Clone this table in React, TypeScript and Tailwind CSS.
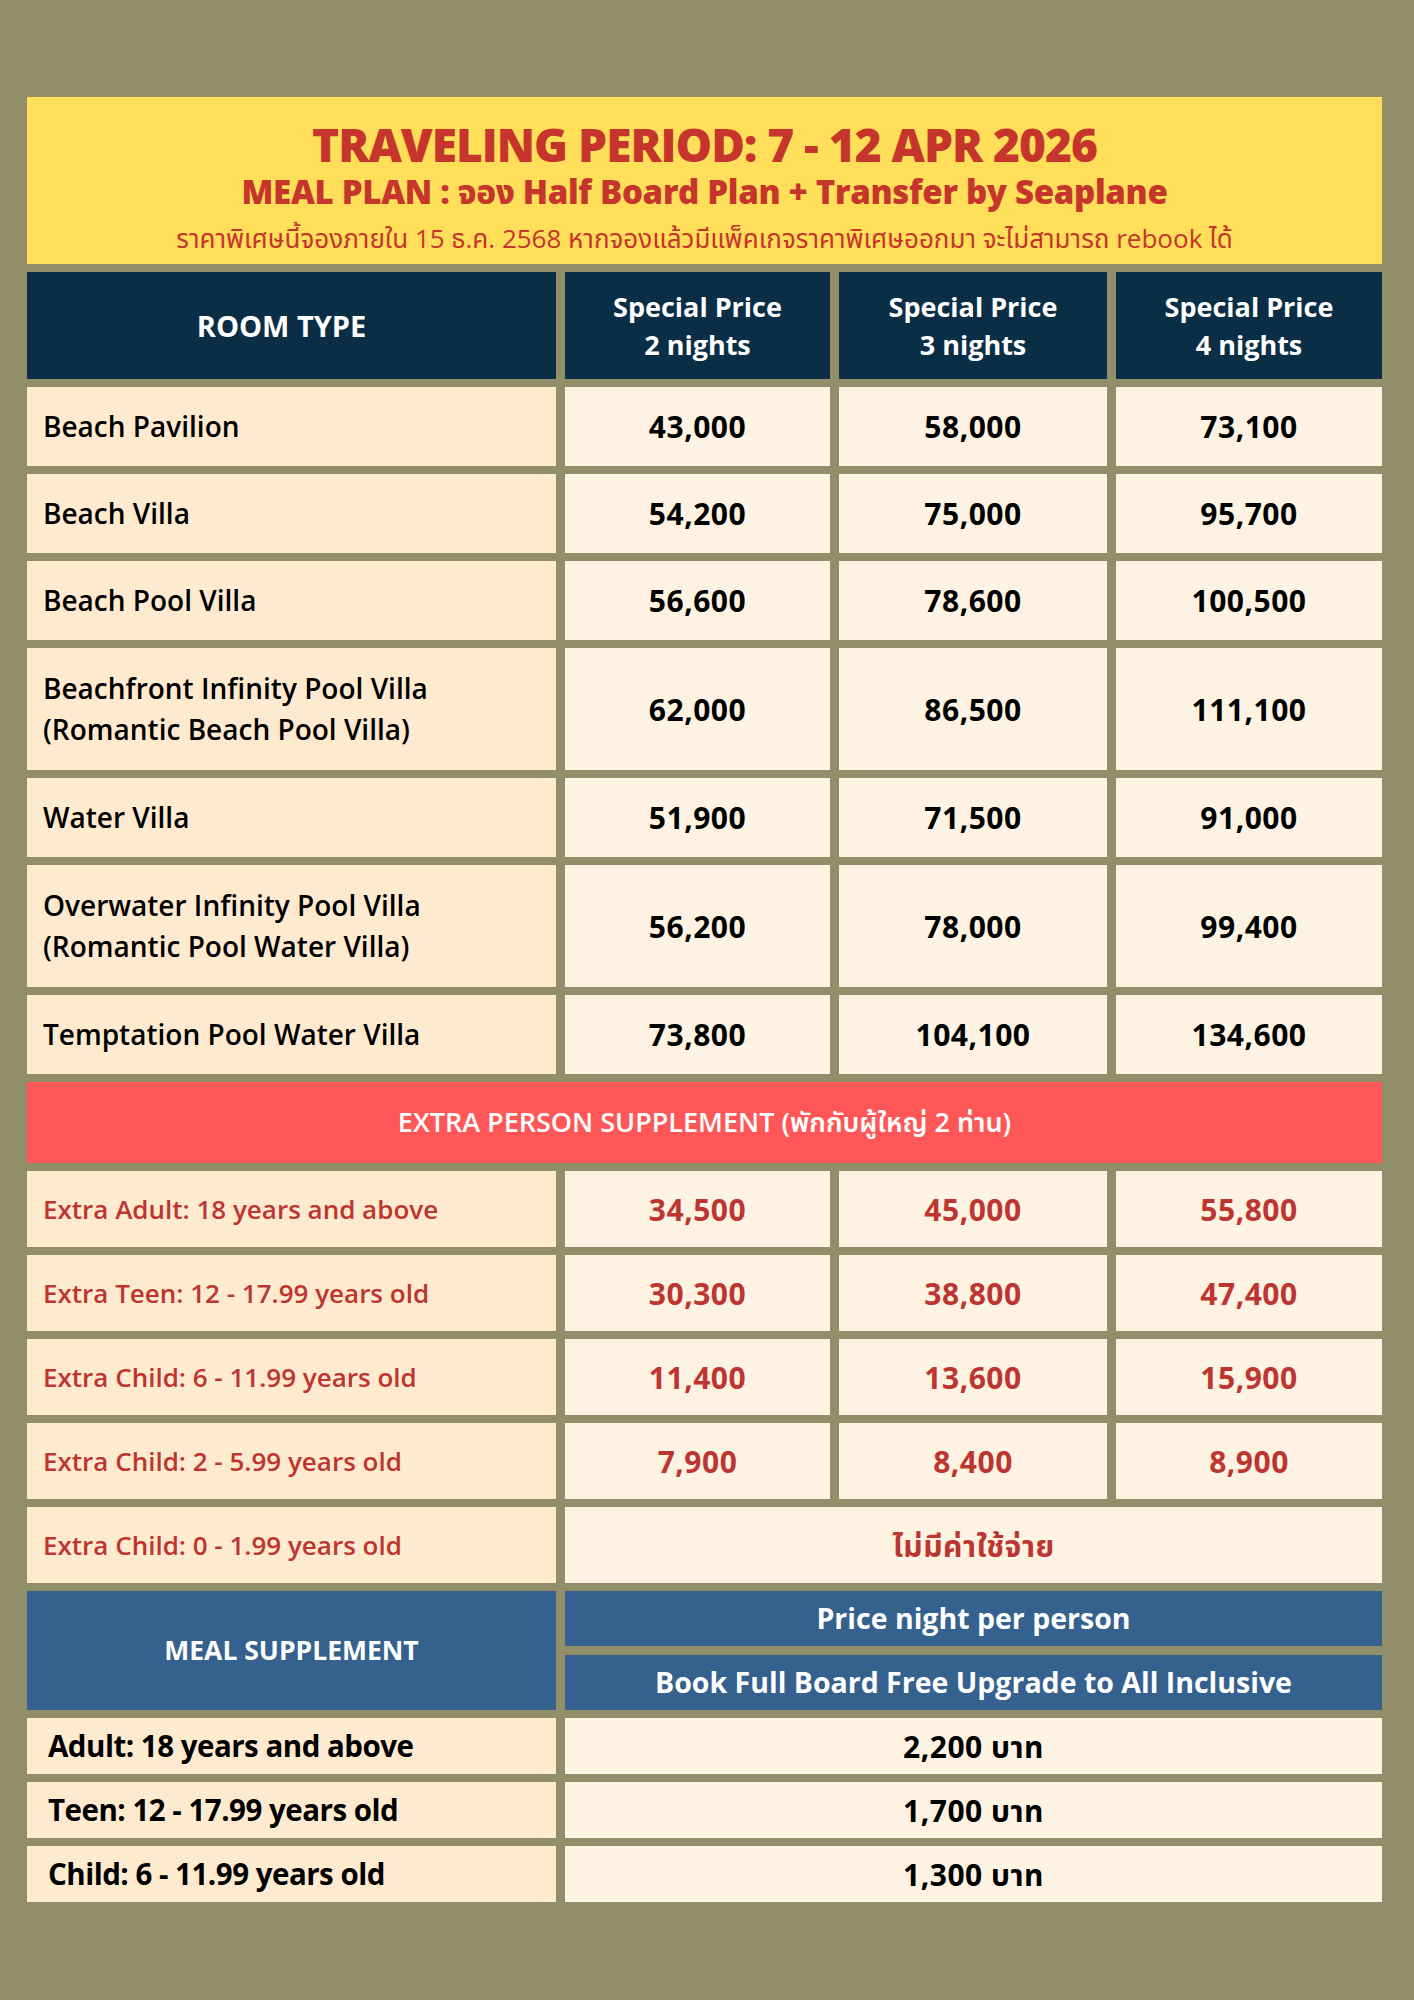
const rooms = [
  { name: ['Beach Pavilion'], prices: ['43,000', '58,000', '73,100'] },
  { name: ['Beach Villa'], prices: ['54,200', '75,000', '95,700'] },
  { name: ['Beach Pool Villa'], prices: ['56,600', '78,600', '100,500'] },
  {
    name: ['Beachfront Infinity Pool Villa', '(Romantic Beach Pool Villa)'],
    prices: ['62,000', '86,500', '111,100'],
  },
  { name: ['Water Villa'], prices: ['51,900', '71,500', '91,000'] },
  {
    name: ['Overwater Infinity Pool Villa', '(Romantic Pool Water Villa)'],
    prices: ['56,200', '78,000', '99,400'],
  },
  { name: ['Temptation Pool Water Villa'], prices: ['73,800', '104,100', '134,600'] },
]

const extras = [
  { label: 'Extra Adult: 18 years and above', prices: ['34,500', '45,000', '55,800'] },
  { label: 'Extra Teen: 12 - 17.99 years old', prices: ['30,300', '38,800', '47,400'] },
  { label: 'Extra Child: 6 - 11.99 years old', prices: ['11,400', '13,600', '15,900'] },
  { label: 'Extra Child: 2 - 5.99 years old', prices: ['7,900', '8,400', '8,900'] },
]

const meals = [
  { label: 'Adult: 18 years and above', price: '2,200 บาท' },
  { label: 'Teen: 12 - 17.99 years old', price: '1,700 บาท' },
  { label: 'Child: 6 - 11.99 years old', price: '1,300 บาท' },
]

const font = "font-['Open_Sans','Noto_Sans','Noto_Sans_Thai',sans-serif]"

function NameCell({ children, className = '' }: { children: React.ReactNode; className?: string }) {
  return (
    <div className={`flex flex-col justify-center bg-[#feebcf] pl-4 ${className}`}>{children}</div>
  )
}

function PriceCell({ children, className = '' }: { children: React.ReactNode; className?: string }) {
  return (
    <div className={`flex items-center justify-center bg-[#fef3e2] text-[30px] font-bold tracking-[0.5px] ${className}`}>
      {children}
    </div>
  )
}

export default function App() {
  return (
    <div className={`min-h-[2000px] w-[1414px] bg-[#918e69] pt-[97px] pl-[27px] ${font}`}>
      <div className="grid w-[1355px] grid-cols-[529px_265px_268px_266px] gap-x-[9px] gap-y-[8px]">
        {/* banner */}
        <div className="col-span-4 flex h-[167px] flex-col items-center bg-[#ffde59] pt-[22px] text-[#c5352c]">
          <div className="text-[46px] font-extrabold leading-[50px] tracking-[-1px]">
            TRAVELING PERIOD: 7 - 12 APR 2026
          </div>
          <div className="mt-[3px] text-[33px] font-extrabold leading-[40px] tracking-[-0.3px]">
            MEAL PLAN : จอง Half Board Plan + Transfer by Seaplane
          </div>
          <div className="mt-[9px] text-[26px] leading-[34px]">
            ราคาพิเศษนี้จองภายใน 15 ธ.ค. 2568 หากจองแล้วมีแพ็คเกจราคาพิเศษออกมา จะไม่สามารถ rebook ได้
          </div>
        </div>

        {/* header */}
        <div className="flex h-[107px] items-center justify-center bg-[#0b2e47] pr-[20px] text-[29px] font-bold text-white">
          ROOM TYPE
        </div>
        {['2', '3', '4'].map((n) => (
          <div
            key={n}
            className="flex h-[107px] flex-col items-center justify-center bg-[#0b2e47] text-[27px] font-bold leading-[38px] text-white"
          >
            <span>Special Price</span>
            <span>{n} nights</span>
          </div>
        ))}

        {/* rooms */}
        {rooms.map((r) => {
          const h = r.name.length > 1 ? 'h-[122px]' : 'h-[79px]'
          return [
            <NameCell key={r.name[0]} className={`${h} text-[28px] font-semibold leading-[41px] text-black`}>
              {r.name.map((l) => (
                <span key={l}>{l}</span>
              ))}
            </NameCell>,
            ...r.prices.map((p, i) => (
              <PriceCell key={r.name[0] + i} className={`${h} text-black`}>
                {p}
              </PriceCell>
            )),
          ]
        })}

        {/* extra person */}
        <div className="col-span-4 flex h-[81px] items-center justify-center bg-[#ff5757] text-[27px] font-semibold text-white">
          EXTRA PERSON SUPPLEMENT (พักกับผู้ใหญ่ 2 ท่าน)
        </div>
        {extras.map((e) => [
          <NameCell key={e.label} className="h-[76px] text-[26px] font-semibold text-[#bd3530]">
            {e.label}
          </NameCell>,
          ...e.prices.map((p, i) => (
            <PriceCell key={e.label + i} className="h-[76px] text-[#bd3530]">
              {p}
            </PriceCell>
          )),
        ])}
        <NameCell className="h-[76px] text-[26px] font-semibold text-[#bd3530]">
          Extra Child: 0 - 1.99 years old
        </NameCell>
        <PriceCell className="col-span-3 h-[76px] text-[#bd3530]">ไม่มีค่าใช้จ่าย</PriceCell>

        {/* meal supplement */}
        <div className="flex h-[119px] items-center justify-center bg-[#35618f] text-[26.5px] font-bold text-white">
          MEAL SUPPLEMENT
        </div>
        <div className="col-span-3 flex flex-col gap-y-[9px]">
          <div className="flex h-[55px] items-center justify-center bg-[#35618f] text-[28.5px] font-bold text-white">
            Price night per person
          </div>
          <div className="flex h-[55px] items-center justify-center bg-[#35618f] text-[28.5px] font-bold text-white">
            Book Full Board Free Upgrade to All Inclusive
          </div>
        </div>
        {meals.map((m) => [
          <div key={m.label} className="flex h-[56px] items-center bg-[#feebcf] pl-[21px] text-[29.5px] font-bold tracking-[-0.5px] text-black">
            {m.label}
          </div>,
          <PriceCell key={m.label + 'p'} className="col-span-3 h-[56px] text-black">
            {m.price}
          </PriceCell>,
        ])}
      </div>
    </div>
  )
}
